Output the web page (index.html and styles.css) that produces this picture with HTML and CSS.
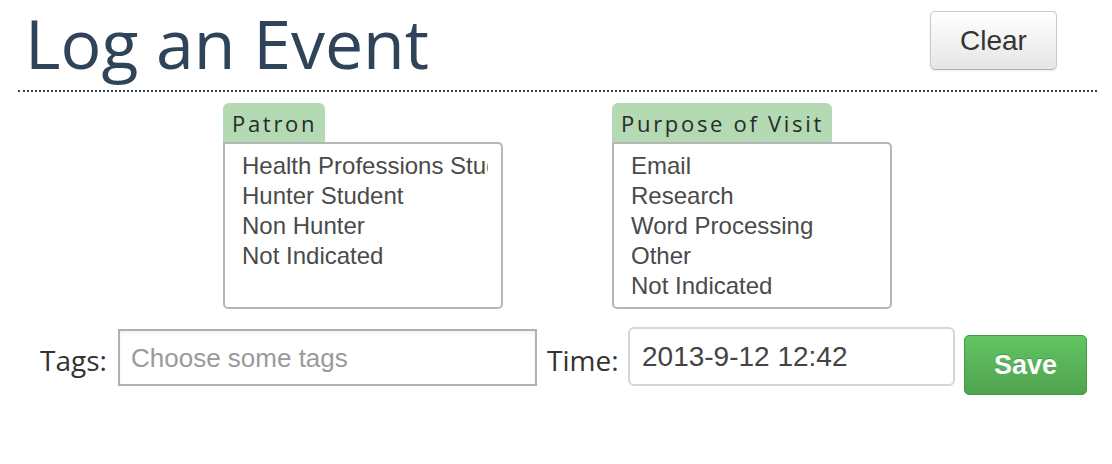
FILE: index.html
```html
<!DOCTYPE html>
<html>
<head>
<meta charset="utf-8">
<title>Log an Event</title>
<link rel="stylesheet" href="styles.css">
</head>
<body>
<div class="page">
  <header class="header">
    <h1 class="title">Log an Event</h1>
    <button class="btn btn-clear">Clear</button>
  </header>
  <section class="pickers">
    <div class="picker">
      <div class="picker-label">Patron</div>
      <ul class="listbox">
        <li>Health Professions Student</li>
        <li>Hunter Student</li>
        <li>Non Hunter</li>
        <li>Not Indicated</li>
      </ul>
    </div>
    <div class="picker">
      <div class="picker-label">Purpose of Visit</div>
      <ul class="listbox">
        <li>Email</li>
        <li>Research</li>
        <li>Word Processing</li>
        <li>Other</li>
        <li>Not Indicated</li>
      </ul>
    </div>
  </section>
  <section class="entry">
    <label class="field-label">Tags:</label>
    <div class="tags-input">Choose some tags</div>
    <label class="field-label time-label">Time:</label>
    <div class="time-input">2013-9-12 12:42</div>
    <button class="btn btn-save">Save</button>
  </section>
</div>
</body>
</html>
```

FILE: styles.css
```css
* { box-sizing: border-box; }
html, body { margin: 0; padding: 0; background: #fff; }
body { font-family: "Liberation Sans", Arial, sans-serif; }

.page { padding: 0 15px 0 18px; }

.header {
  display: flex;
  align-items: flex-start;
  justify-content: space-between;
  border-bottom: 2px dotted #2f4359;
  height: 92px;
}
.title {
  margin: 0;
  padding: 1px 0 0 7px;
  font-family: "Open Sans", sans-serif;
  font-weight: 400;
  font-size: 68px;
  line-height: 84px;
  color: #2f4359;
}
.btn {
  font-family: "Liberation Sans", Arial, sans-serif;
  cursor: pointer;
}
.btn-clear {
  margin: 11px 40px 0 0;
  width: 127px;
  height: 59px;
  border: 1px solid #c8c8c8;
  border-bottom-color: #b3b3b3;
  border-radius: 5px;
  background: linear-gradient(#ffffff, #e6e6e6);
  box-shadow: inset 0 1px 0 rgba(255,255,255,0.3), 0 1px 2px rgba(0,0,0,0.08);
  font-size: 28px;
  color: #333;
}

.pickers {
  display: flex;
  justify-content: center;
  gap: 109px;
  margin-top: 11px;
}
.picker { display: flex; flex-direction: column; align-items: flex-start; }
.picker-label {
  background: #b3dab2;
  border-radius: 6px 6px 0 0;
  height: 39px;
  padding: 5px 8px 0 9px;
  font-family: "Open Sans", sans-serif;
  font-size: 22px;
  letter-spacing: 2.7px;
  line-height: 30px;
  color: #2a2a2a;
}
.listbox {
  list-style: none;
  margin: 0;
  width: 280px;
  height: 167px;
  border: 2px solid #b6b6b6;
  border-radius: 0 5px 5px 5px;
  padding: 7px 13px 0 17px;
  overflow: hidden;
  font-size: 24px;
  line-height: 30px;
  color: #4a4a4a;
}
.listbox li { white-space: nowrap; overflow: hidden; }

.entry {
  display: flex;
  align-items: flex-start;
  margin-top: 18px;
  padding-left: 22px;
}
.field-label {
  font-family: "Open Sans", sans-serif;
  font-size: 28px;
  line-height: 40px;
  color: #333;
  margin-top: 13px;
  width: 78px;
}
.time-label { margin-left: 10px; width: 81px; }
.tags-input {
  margin-top: 2px;
  width: 419px;
  height: 57px;
  border: 2px solid #b1b1b1;
  padding: 12px 0 0 11px;
  font-size: 26px;
  line-height: 30px;
  color: #9a9a9a;
  box-shadow: inset 0 2px 4px rgba(0,0,0,0.06);
}
.time-input {
  width: 327px;
  height: 59px;
  border: 2px solid #d6d6d6;
  border-radius: 6px;
  padding: 12px 0 0 12px;
  font-size: 28px;
  line-height: 32px;
  color: #444;
}
.btn-save {
  margin-left: 9px;
  margin-top: 8px;
  width: 123px;
  height: 60px;
  border: 1px solid #449b44;
  border-radius: 5px;
  background: linear-gradient(#62c462, #4fa34f);
  color: #fff;
  font-weight: bold;
  font-size: 27px;
  text-shadow: 0 -1px 0 rgba(0,0,0,0.2);
}
```
